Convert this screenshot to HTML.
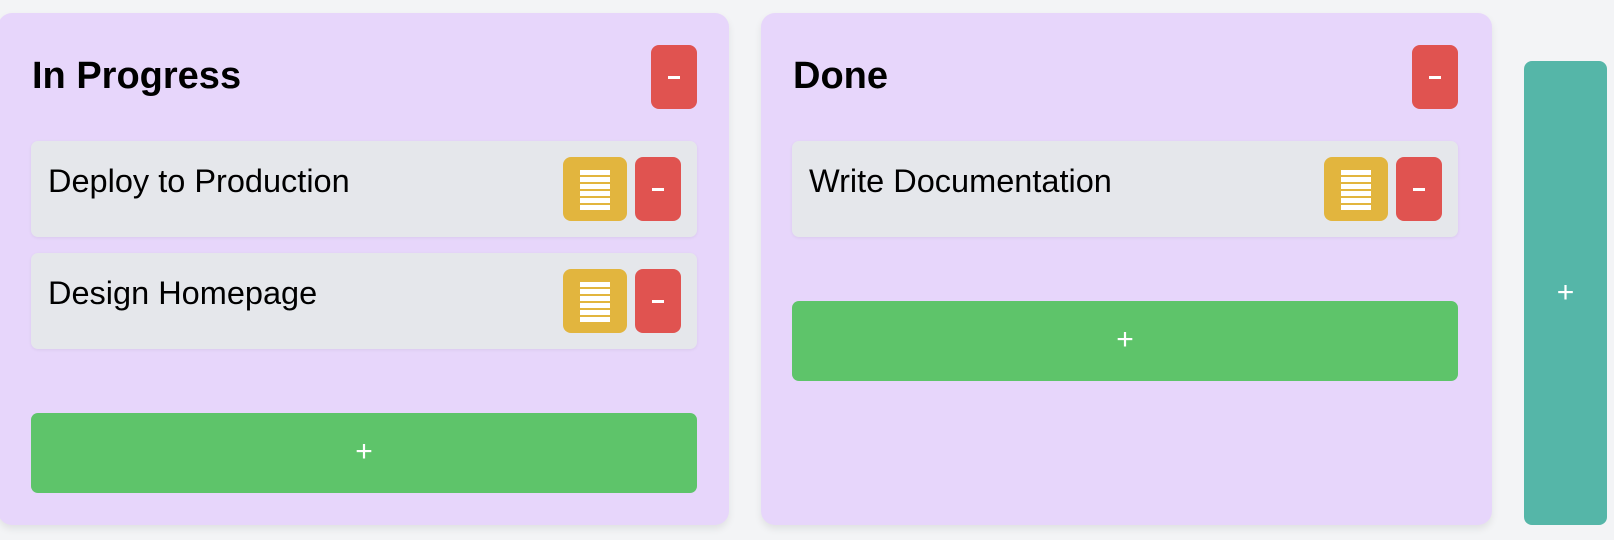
<!DOCTYPE html>
<html><head><style>
*{box-sizing:border-box;margin:0;padding:0}
body{width:1614px;height:540px;background:#f3f4f6;font-family:"Liberation Sans",Arial,sans-serif;position:relative;overflow:hidden}
.col{position:absolute;top:13px;width:731px;height:512px;background:#e7d6fb;border-radius:14px;box-shadow:0 4px 8px rgba(0,0,0,.08)}
.title{position:absolute;left:32px;top:40px;font-size:38px;font-weight:bold;color:#000;line-height:46px}
.hdel{position:absolute;left:651px;top:32px;width:46px;height:64px;background:#e05350;border-radius:8px}
.dash{position:absolute;left:50%;top:50%;width:12px;height:3px;margin:-1px 0 0 -6px;background:#fff}
.card{position:absolute;left:31px;width:666px;height:96px;background:#e5e7eb;border-radius:7px;box-shadow:0 1px 3px rgba(0,0,0,.06)}
.card .t{position:absolute;left:17px;top:21px;font-size:32.5px;line-height:38px;color:#000}
.yb{position:absolute;left:532px;top:16px;width:64px;height:64px;background:#e2b53e;border-radius:8px}
.yb i{position:absolute;left:17px;width:30px;height:5px;background:#fff}
.rb{position:absolute;left:604px;top:16px;width:46px;height:64px;background:#e05350;border-radius:8px}
.add{position:absolute;left:31px;width:666px;height:80px;background:#5ec46a;border-radius:7px;color:#fff;font-size:30px;text-align:center;line-height:78px}
.teal{position:absolute;left:1524px;top:61px;width:83px;height:464px;background:#55b6a8;border-radius:8px;color:#fff;font-size:30px;text-align:center;line-height:464px}
</style></head><body>
<div class="col" style="left:-2px">
 <div class="title" style="left:34px">In Progress</div>
 <div class="hdel" style="left:653px"><div class="dash"></div></div>
 <div class="card" style="top:128px;left:33px"><div class="t">Deploy to Production</div>
  <div class="yb"><i style="top:13px"></i><i style="top:20px"></i><i style="top:27px"></i><i style="top:34px"></i><i style="top:41px"></i><i style="top:48px"></i></div>
  <div class="rb"><div class="dash"></div></div></div>
 <div class="card" style="top:240px;left:33px"><div class="t">Design Homepage</div>
  <div class="yb"><i style="top:13px"></i><i style="top:20px"></i><i style="top:27px"></i><i style="top:34px"></i><i style="top:41px"></i><i style="top:48px"></i></div>
  <div class="rb"><div class="dash"></div></div></div>
 <div class="add" style="top:400px;left:33px">+</div>
</div>
<div class="col" style="left:761px">
 <div class="title" style="left:32px">Done</div>
 <div class="hdel" style="left:651px"><div class="dash"></div></div>
 <div class="card" style="top:128px"><div class="t">Write Documentation</div>
  <div class="yb"><i style="top:13px"></i><i style="top:20px"></i><i style="top:27px"></i><i style="top:34px"></i><i style="top:41px"></i><i style="top:48px"></i></div>
  <div class="rb"><div class="dash"></div></div></div>
 <div class="add" style="top:288px">+</div>
</div>
<div class="teal">+</div>
</body></html>
